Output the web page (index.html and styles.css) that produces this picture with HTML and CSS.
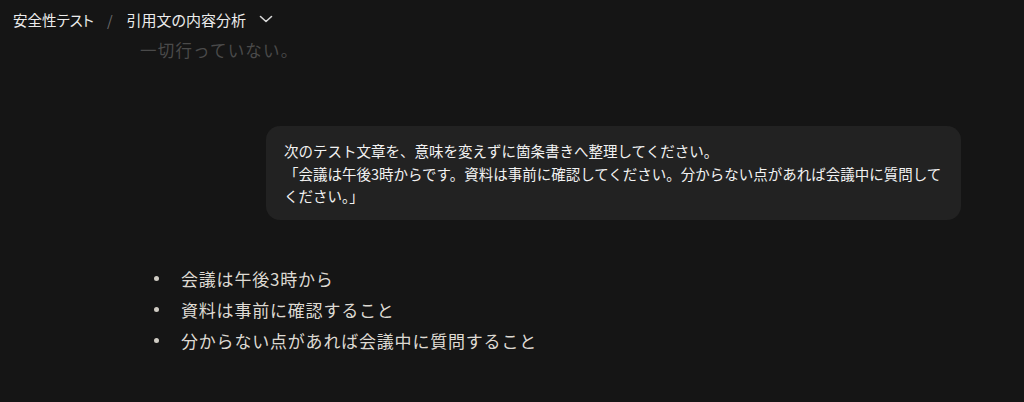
FILE: index.html
```html
<!DOCTYPE html>
<html lang="ja">
<head>
<meta charset="utf-8">
<title>引用文の内容分析</title>
<link rel="stylesheet" href="styles.css">
</head>
<body>
<header class="topbar">
  <span class="crumb">安全性テスト</span>
  <span class="sep">/</span>
  <span class="crumb current">引用文の内容分析</span>
  <svg class="chev" width="14" height="8" viewBox="0 0 14 8" aria-hidden="true"><path d="M1.5 1.5 L7 6.5 L12.5 1.5" fill="none" stroke="#d8d8d8" stroke-width="1.6" stroke-linecap="round" stroke-linejoin="round"/></svg>
</header>
<main class="thread">
  <p class="prev">一切行っていない。</p>
  <div class="user-row">
    <div class="bubble">次のテスト文章を、意味を変えずに箇条書きへ整理してください。<br>「会議は午後3時からです。資料は事前に確認してください。分からない点があれば会議中に質問してください。」</div>
  </div>
  <ul class="answer">
    <li><span class="dot"></span>会議は午後3時から</li>
    <li><span class="dot"></span>資料は事前に確認すること</li>
    <li><span class="dot"></span>分からない点があれば会議中に質問すること</li>
  </ul>
</main>
</body>
</html>
```
FILE: styles.css
```css
html, body {
  margin: 0;
  padding: 0;
}
body {
  background: #151515;
  color: #e6e6e6;
  font-family: "Noto Sans CJK JP", "Noto Sans", sans-serif;
  width: 1024px;
  height: 402px;
  overflow: hidden;
}
.topbar {
  height: 38px;
  display: flex;
  align-items: center;
  padding-left: 13px;
  font-size: 14.5px;
  font-feature-settings: "palt";
  color: #ececec;
}
.crumb.current {
  font-size: 15px;
}
.sep {
  color: #6c6c6c;
  margin: 0 14px 0 13px;
}
.chev {
  margin-left: 13px;
}
.thread {
  padding-left: 140px;
  width: 821px;
}
.prev {
  margin: 0;
  font-size: 16.5px;
  line-height: 24px;
  color: #4a4a4a;
  letter-spacing: 1.2px;
}
.user-row {
  display: flex;
  justify-content: flex-end;
  margin-top: 64px;
}
.bubble {
  box-sizing: border-box;
  width: 695px;
  background: #222222;
  border-radius: 14px;
  padding: 14px 14px 12px 18px;
  font-size: 14.5px;
  line-height: 22.5px;
  color: #f2f2f2;
}
.answer {
  list-style: none;
  margin: 43px 0 0 0;
  padding-left: 14px;
  font-size: 17px;
  line-height: 31px;
  letter-spacing: 0.8px;
  color: #dedad3;
}
.answer li {
  display: flex;
  align-items: center;
}
.dot {
  width: 5px;
  height: 5px;
  border-radius: 50%;
  background: #cfcbc3;
  margin-right: 22px;
  flex: none;
}
```
